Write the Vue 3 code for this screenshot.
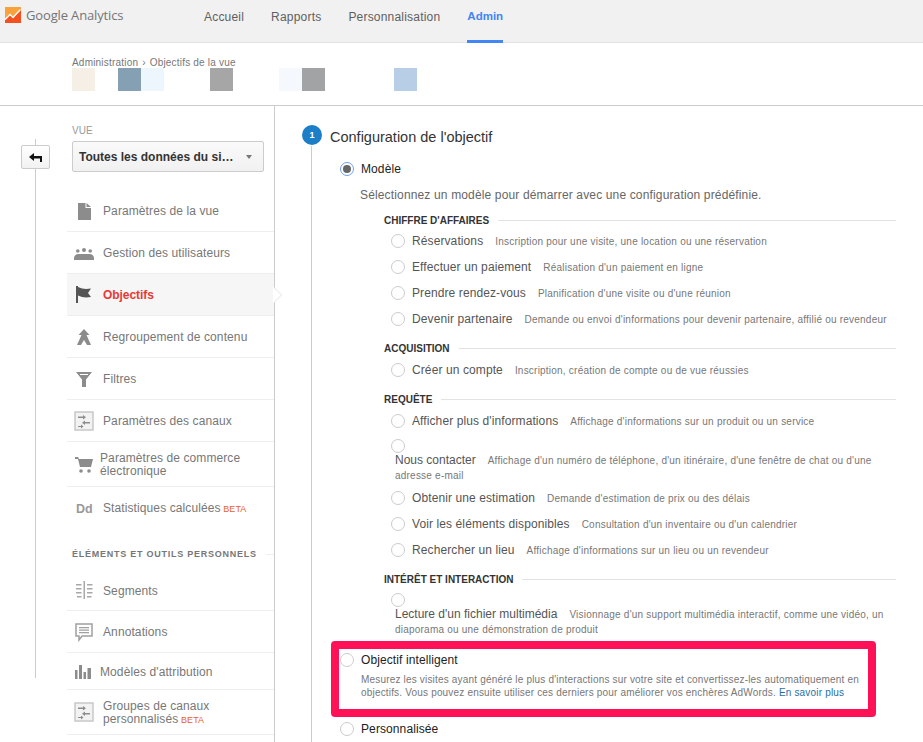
<script setup>
const navLinks = [
  { label: 'Accueil' },
  { label: 'Rapports' },
  { label: 'Personnalisation' },
  { label: 'Admin', active: true }
]

// bandes floutées sous le fil d'Ariane, une case = 23px
const blurCells = ['#f6efe6', null, '#84a0b2', '#ecf6fc', null, null, '#a6a6a6', null, null, '#f5f8fc', '#a2a3a4', null, null, null, '#b8cee6']

const viewMenu = [
  { id: 'doc', label: 'Paramètres de la vue', h: 42 },
  { id: 'users', label: 'Gestion des utilisateurs', h: 42 },
  { id: 'flag', label: 'Objectifs', h: 42, active: true },
  { id: 'group', label: 'Regroupement de contenu', h: 42 },
  { id: 'filter', label: 'Filtres', h: 42 },
  { id: 'channel', label: 'Paramètres des canaux', h: 42 },
  { id: 'cart', label: 'Paramètres de commerce électronique', h: 45, tight: true },
  { id: 'dd', label: 'Statistiques calculées', h: 42, beta: true, last: true }
]

const personalMenu = [
  { id: 'segments', label: 'Segments', h: 41 },
  { id: 'notes', label: 'Annotations', h: 42 },
  { id: 'bars', label: "Modèles d'attribution", h: 37, tight: true },
  { id: 'channel', label: 'Groupes de canaux personnalisés', h: 45, beta: true }
]

const goalGroups = [
  {
    title: "CHIFFRE D'AFFAIRES",
    items: [
      { name: 'Réservations', desc: "Inscription pour une visite, une location ou une réservation" },
      { name: 'Effectuer un paiement', desc: "Réalisation d'un paiement en ligne" },
      { name: 'Prendre rendez-vous', desc: "Planification d'une visite ou d'une réunion" },
      { name: 'Devenir partenaire', desc: "Demande ou envoi d'informations pour devenir partenaire, affilié ou revendeur" }
    ]
  },
  {
    title: 'ACQUISITION',
    items: [{ name: 'Créer un compte', desc: 'Inscription, création de compte ou de vue réussies' }]
  },
  {
    title: 'REQUÊTE',
    items: [
      { name: "Afficher plus d'informations", desc: "Affichage d'informations sur un produit ou un service" },
      { name: 'Nous contacter', desc: "Affichage d'un numéro de téléphone, d'un itinéraire, d'une fenêtre de chat ou d'une adresse e-mail", wrap: true },
      { name: 'Obtenir une estimation', desc: 'Demande d\'estimation de prix ou des délais' },
      { name: 'Voir les éléments disponibles', desc: "Consultation d'un inventaire ou d'un calendrier" },
      { name: 'Rechercher un lieu', desc: "Affichage d'informations sur un lieu ou un revendeur" }
    ]
  },
  {
    title: 'INTÉRÊT ET INTERACTION',
    items: [
      { name: "Lecture d'un fichier multimédia", desc: "Visionnage d'un support multimédia interactif, comme une vidéo, un diaporama ou une démonstration de produit", wrap: true }
    ]
  }
]
</script>

<template>
  <div class="page">
    <header class="topbar">
      <div class="brand">
        <svg class="brand-logo" viewBox="0 0 16 16">
          <rect width="16" height="16" fill="#f9a13a" />
          <path d="M0 16V12l5-5 3 3 8-8v14z" fill="#f4511e" />
          <path d="M0 12.500 5 7.500l3 3 7.500-8" fill="none" stroke="#fff" stroke-width="1.500" />
        </svg>
        <span class="brand-name">Google Analytics</span>
      </div>
      <nav class="nav">
        <a v-for="link in navLinks" :key="link.label" class="nav-link" :class="{ active: link.active }">{{ link.label }}</a>
      </nav>
    </header>

    <div class="subbar">
      <div class="crumbs">Administration <span class="crumb-sep">›</span> Objectifs de la vue</div>
      <div class="blur-row">
        <span v-for="(c, i) in blurCells" :key="i" class="blur-cell" :style="{ background: c || 'transparent' }"></span>
      </div>
    </div>

    <div class="content">
      <aside class="side">
        <div class="back-col">
          <button class="back-btn">
            <svg width="13" height="9" viewBox="0 0 13 9"><path d="M5 0 0 4l5 4V5.500h6V9h2V3H5z" fill="#111" /></svg>
          </button>
        </div>
        <div class="side-col">
          <div class="view-label">VUE</div>
          <div class="view-select">
            <span>Toutes les données du si…</span>
            <i class="caret"></i>
          </div>

          <ul class="menu first">
            <li v-for="item in viewMenu" :key="item.label" class="menu-item" :class="{ active: item.active, tight: item.tight, last: item.last }" :style="{ height: item.h + 'px' }">
              <svg class="menu-icon" viewBox="0 0 20 20"><use :href="'#ic-' + item.id" /></svg>
              <span class="menu-text">{{ item.label }}<em v-if="item.beta" class="beta"> BETA</em></span>
            </li>
          </ul>

          <div class="side-heading"><span>ÉLÉMENTS ET OUTILS PERSONNELS</span></div>

          <ul class="menu">
            <li v-for="item in personalMenu" :key="item.label" class="menu-item" :class="{ tight: item.tight }" :style="{ height: item.h + 'px' }">
              <svg class="menu-icon" viewBox="0 0 20 20"><use :href="'#ic-' + item.id" /></svg>
              <span class="menu-text">{{ item.label }}<em v-if="item.beta" class="beta"> BETA</em></span>
            </li>
          </ul>
        </div>
      </aside>

      <main class="main">
        <div class="step-rail"></div>
        <div class="step-num">1</div>
        <h2 class="step-title">Configuration de l'objectif</h2>

        <div class="choice">
          <span class="radio checked"></span>
          <span class="choice-name">Modèle</span>
        </div>
        <p class="choice-intro">Sélectionnez un modèle pour démarrer avec une configuration prédéfinie.</p>

        <section v-for="group in goalGroups" :key="group.title" class="group">
          <div class="group-title"><span>{{ group.title }}</span></div>
          <div v-for="item in group.items" :key="item.name" class="goal" :class="{ wrapped: item.wrap }">
            <span class="radio"></span>
            <span class="goal-body"><span class="goal-name">{{ item.name }}</span><span class="goal-desc">{{ item.desc }}</span></span>
          </div>
        </section>

        <div class="smart-box">
          <div class="choice smart-choice">
            <span class="radio"></span>
            <span class="choice-name">Objectif intelligent</span>
          </div>
          <p class="smart-text">Mesurez les visites ayant généré le plus d'interactions sur votre site et convertissez-les automatiquement en objectifs. Vous pouvez ensuite utiliser ces derniers pour améliorer vos enchères AdWords. <a>En savoir plus</a></p>
        </div>

        <div class="choice custom">
          <span class="radio"></span>
          <span class="choice-name">Personnalisée</span>
        </div>
      </main>
    </div>

    <svg class="icon-defs" width="0" height="0">
      <defs>
        <symbol id="ic-doc" viewBox="0 0 20 20"><path d="M4 2h7.500v5H17v12H4zM12.500 2 17 6h-4.500z" fill="#8c8c8c" /></symbol>
        <symbol id="ic-users" viewBox="0 0 20 20"><g fill="#8c8c8c"><circle cx="3.800" cy="8" r="1.800" /><circle cx="10" cy="7" r="2" /><circle cx="16.200" cy="8" r="1.800" /><path d="M0 17v-2c0-2 2-4 4-4h12c2 0 4 2 4 4v2z" /></g></symbol>
        <symbol id="ic-flag" viewBox="0 0 20 20"><path d="M2 1h2v17H2zM4 2c4 2 8 2.500 13 1.500l-3 4.500 3 4c-5 1-9 .5-13-1.500z" fill="#555" /></symbol>
        <symbol id="ic-group" viewBox="0 0 20 20"><path d="M10 2l5.500 6h-3L17 18h-4l-3-5-3 5H3l4.500-10h-3z" fill="#8c8c8c" /></symbol>
        <symbol id="ic-filter" viewBox="0 0 20 20"><path d="M2 3h16l-6 7.500V18H8v-7.500zM6 5v1h8V5z" fill="#8c8c8c" fill-rule="evenodd" /></symbol>
        <symbol id="ic-channel" viewBox="0 0 20 20"><rect x="1" y="1" width="18" height="18" fill="#f2f2f2" stroke="#c8c8c8" stroke-width="1.500" /><path d="M4 5.500h5V4l3 2.200-3 2.200V7H4zM16 11h-5V9.500l-3 2.200 3 2.200v-1.400h5zM4 15h3v-1.500l2.500 2-2.500 2V16H4z" fill="#8c8c8c" /></symbol>
        <symbol id="ic-cart" viewBox="0 0 20 20"><path d="M1 3h3l1 2h14l-2 8H6L4 5H1z" fill="#8c8c8c" /><circle cx="7" cy="17" r="1.800" fill="#8c8c8c" /><circle cx="15" cy="17" r="1.800" fill="#8c8c8c" /></symbol>
        <symbol id="ic-dd" viewBox="0 0 20 20"><text x="2" y="15" font-family="Liberation Sans" font-size="12.500" font-weight="700" fill="#999">Dd</text></symbol>
        <symbol id="ic-segments" viewBox="0 0 20 20"><path d="M9.500 1h1.500v18H9.500zM2 4h5.500v1.500H2zM2 8h5.500v1.500H2zM2 12h5.500v1.500H2zM3 16h4.500v1.500H3zM13 4h5.500v1.500H13zM13 8h5.500v1.500H13zM13 12h5.500v1.500H13zM13 16h4.500v1.500H13z" fill="#a8a8a8" /></symbol>
        <symbol id="ic-notes" viewBox="0 0 20 20"><path d="M2 2h16v12H8l-3 4v-4H2z" fill="none" stroke="#a0a0a0" stroke-width="1.500" /><path d="M5 5h10v1.200H5zM5 7.500h10v1.200H5zM5 10h10v1.200H5z" fill="#a0a0a0" /></symbol>
        <symbol id="ic-bars" viewBox="0 0 20 20"><path d="M1 9h2.500v9H1zM5 4h3v14H5zM9.500 11H12v7H9.500zM13.500 7H17v11h-3.500z" fill="#8c8c8c" /></symbol>
      </defs>
    </svg>
  </div>
</template>

<style>
html, body { margin: 0; background: #fff; }
</style>

<style scoped>
.page {
  width: 923px;
  height: 742px;
  overflow: hidden;
  font-family: "Liberation Sans", Arial, sans-serif;
  color: #666;
  font-size: 12px;
}
.icon-defs { position: absolute; }

.topbar {
  height: 43px;
  box-sizing: border-box;
  background: #f1f1f1;
  border-bottom: 1px solid #e2e2e2;
  display: flex;
}
.brand {
  width: 204px;
  display: flex;
  align-items: flex-start;
  padding: 7px 0 0 5px;
  box-sizing: border-box;
}
.brand-logo { width: 16px; height: 16px; }
.brand-name {
  margin-left: 5px;
  margin-top: -1px;
  font-family: "Open Sans", sans-serif;
  font-size: 13px;
  line-height: 18px;
  color: #757575;
  letter-spacing: -0.15px;
}
.nav { display: flex; gap: 27px; }
.nav-link {
  height: 43px;
  box-sizing: border-box;
  padding-top: 9px;
  line-height: 16px;
  color: #5f5f5f;
  letter-spacing: 0.2px;
}
.nav-link.active {
  color: #4285f4;
  font-size: 11.500px;
  font-weight: 700;
  border-bottom: 3px solid #4285f4;
  padding-top: 8px;
  letter-spacing: 0;
}

.subbar {
  height: 63px;
  box-sizing: border-box;
  border-bottom: 1px solid #ccc;
  padding: 14px 0 0 72px;
}
.crumbs { font-size: 10px; line-height: 11px; color: #777; letter-spacing: 0.2px; }
.crumb-sep { margin: 0 1px; }
.blur-row { display: flex; }
.blur-cell { width: 23px; height: 23px; }

.content { display: flex; height: 636px; }

.side {
  width: 275px;
  box-sizing: border-box;
  border-right: 1px solid #ccc;
  display: flex;
}
.back-col {
  width: 67px;
  flex: none;
  height: 539px;
  margin-top: 33px;
  box-sizing: border-box;
  background: linear-gradient(#ccc, #ccc) no-repeat 35px 0 / 1px 100%;
  padding: 6px 0 0 21px;
}
.back-btn {
  width: 29px;
  height: 24px;
  padding: 0;
  background: linear-gradient(#fff, #f1f1f1);
  border: 1px solid #ccc;
  border-radius: 2px;
  display: flex;
  align-items: center;
  justify-content: center;
}
.side-col { flex: 1; min-width: 0; }
.view-label {
  margin: 19px 0 0 5px;
  font-size: 10px;
  line-height: 12px;
  color: #999;
}
.view-select {
  margin: 4px 10px 0 5px;
  height: 31px;
  box-sizing: border-box;
  border: 1px solid #ccc;
  border-radius: 2px;
  background: linear-gradient(#fafafa, #f1f1f1);
  display: flex;
  align-items: center;
  justify-content: space-between;
  padding: 0 11px 0 6px;
  font-size: 12px;
  font-weight: 700;
  color: #333;
  white-space: nowrap;
}
.caret {
  width: 0;
  height: 0;
  border: 3.500px solid transparent;
  border-top: 4px solid #777;
  border-bottom: 0;
}

.menu { list-style: none; margin: 0; padding: 0; }
.menu.first { margin-top: 18px; }
.menu-item {
  box-sizing: border-box;
  display: flex;
  align-items: center;
  padding-left: 7px;
  border-bottom: 1px solid #eee;
  position: relative;
}
.menu-item.last { border-bottom: 0; }
.menu-icon { width: 20px; height: 20px; flex: none; }
.menu-text {
  margin-left: 9px;
  padding-top: 2px;
  color: #777;
  line-height: 13px;
  letter-spacing: 0.1px;
}
.menu-item.tight .menu-text { margin-left: 6px; }
.menu-item.active { background: #f6f6f6; }
.menu-item.active .menu-text { color: #e53935; font-weight: 700; letter-spacing: -0.05px; }
.menu-item.active::before,
.menu-item.active::after {
  content: "";
  position: absolute;
  top: 13px;
  right: -8px;
  border-style: solid;
  border-width: 8px 0 8px 8px;
  border-color: transparent transparent transparent #e2e2e2;
}
.menu-item.active::after {
  right: -7px;
  border-left-color: #fff;
}
.beta { font-style: normal; font-size: 9px; color: #e8622a; }

.side-heading {
  margin: 19px 0 0 5px;
  display: flex;
  align-items: center;
  font-size: 9px;
  line-height: 12px;
  font-weight: 700;
  letter-spacing: 0.75px;
  color: #777;
  white-space: nowrap;
}
.side-heading::after {
  content: "";
  flex: 1;
  height: 1px;
  background: #eee;
  margin-left: 9px;
}
.side-heading + .menu { margin-top: 10px; }

.main {
  flex: 1;
  position: relative;
  padding: 0 27px 0 55px;
  min-width: 0;
}
.step-rail {
  position: absolute;
  left: 36px;
  top: 40px;
  bottom: 0;
  width: 1px;
  background: #ccc;
}
.step-num {
  position: absolute;
  left: 27px;
  top: 19px;
  width: 20px;
  height: 20px;
  border-radius: 50%;
  background: #1c7ec6;
  color: #fff;
  font-size: 9px;
  font-weight: 700;
  line-height: 20px;
  text-align: center;
}
.step-title {
  margin: 0;
  padding-top: 21px;
  font-size: 14.500px;
  font-weight: 400;
  line-height: 20px;
  color: #333;
}
.radio {
  width: 12px;
  height: 12px;
  flex: none;
  border: 1px solid #ccc;
  border-radius: 50%;
  background: #fff;
}
.radio.checked {
  border-color: #6ea0f0;
  position: relative;
}
.radio.checked::after {
  content: "";
  position: absolute;
  inset: 2px;
  border-radius: 50%;
  background: #666;
}
.choice {
  display: flex;
  align-items: center;
  gap: 7px;
  margin-left: 10px;
  line-height: 16px;
}
.step-title + .choice { margin-top: 14px; }
.choice-name { color: #222; letter-spacing: 0.1px; }
.choice-intro {
  margin: 10px 0 0 30px;
  line-height: 16px;
  color: #666;
  letter-spacing: 0.15px;
}

.group { margin-left: 54px; }
.group:first-of-type { margin-top: 10px; }
.group-title {
  display: flex;
  align-items: center;
  height: 15px;
  margin-top: 6px;
  font-size: 10px;
  font-weight: 700;
  color: #333;
  white-space: nowrap;
}
.group + .group .group-title {
  height: 17px;
  margin-top: 8px;
}
.group-title::after {
  content: "";
  flex: 1;
  height: 1px;
  background: #e2e2e2;
  margin-left: 9px;
}
.goal {
  display: flex;
  align-items: center;
  gap: 7px;
  height: 26px;
  margin-left: 7px;
}
.goal-name { color: #555; margin-right: 12px; letter-spacing: 0.1px; }
.goal-desc { font-size: 10px; color: #777; letter-spacing: 0.22px; }
.goal.wrapped {
  display: block;
  height: 51px;
  box-sizing: border-box;
  padding-top: 5px;
}
.goal.wrapped .radio { display: block; }
.goal.wrapped .goal-body {
  display: block;
  margin-left: 4px;
  line-height: 14px;
}
.goal.wrapped .goal-name { letter-spacing: 0; }

.smart-box {
  margin: 2px 0 0 1px;
  width: 545px;
  height: 76px;
  box-sizing: border-box;
  border: 8px solid #ff1158;
  border-radius: 4px;
  padding: 3px 8px 0 1px;
  background: #fff;
}
.smart-choice { margin-left: 0; }
.smart-text {
  margin: 5px 0 0 21px;
  font-size: 10px;
  line-height: 13px;
  color: #777;
  letter-spacing: 0.18px;
}
.smart-text a { color: #1f6fa8; }
.custom { margin-top: 4px; }
</style>
